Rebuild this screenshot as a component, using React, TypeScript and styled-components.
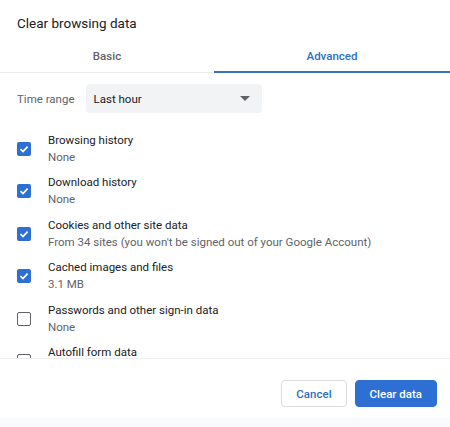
import styled, { createGlobalStyle } from "styled-components";

const GlobalStyle = createGlobalStyle`
  html, body {
    margin: 0;
    padding: 0;
    background: #ffffff;
  }
  body {
    font-family: Roboto, "Liberation Sans", Arial, sans-serif;
    color: #202124;
  }
`;

const Dialog = styled.div`
  width: 450px;
  height: 427px;
  display: flex;
  flex-direction: column;
  background: #ffffff;
  overflow: hidden;
`;

const Title = styled.h1`
  margin: 0;
  padding: 13px 17px 0;
  height: 25px;
  font-size: 13.5px;
  font-weight: 400;
  line-height: 20px;
  color: #202124;
`;

const Tabs = styled.div`
  display: flex;
  height: 34px;
  border-bottom: 1px solid #e8eaed;
`;

const Tab = styled.div<{ $active?: boolean; $width?: string }>`
  flex: ${(p) => (p.$width ? `0 0 ${p.$width}` : "1")};
  display: flex;
  align-items: center;
  justify-content: center;
  font-size: 11.5px;
  font-weight: 500;
  color: ${(p) => (p.$active ? "#2f6fc0" : "#5f6368")};
  box-shadow: ${(p) => (p.$active ? "inset 0 -2px 0 #3a74bf" : "none")};
  margin-bottom: -1px;
`;

const Body = styled.div`
  height: 285px;
  overflow: hidden;
  border-bottom: 1px solid #eceef1;
`;

const RangeRow = styled.div`
  display: flex;
  align-items: center;
  gap: 11px;
  padding: 11px 17px 0;
`;

const RangeLabel = styled.span`
  font-size: 11.5px;
  color: #5f6368;
`;

const Select = styled.div`
  width: 176px;
  height: 29px;
  box-sizing: border-box;
  display: flex;
  align-items: center;
  justify-content: space-between;
  padding: 0 12px 0 8px;
  background: #f1f3f4;
  border-radius: 4px;
  font-size: 11.5px;
  color: #202124;
`;

const Caret = styled.span`
  width: 0;
  height: 0;
  border-left: 5px solid transparent;
  border-right: 5px solid transparent;
  border-top: 5px solid #5f6368;
`;

const List = styled.div`
  display: flex;
  flex-direction: column;
  gap: 8.4px;
  padding: 19px 0 0 17px;
`;

const Item = styled.div`
  display: flex;
  align-items: center;
  gap: 17px;
`;

const Box = styled.span<{ $checked?: boolean }>`
  width: 14px;
  height: 14px;
  box-sizing: border-box;
  border-radius: 2px;
  display: flex;
  align-items: center;
  justify-content: center;
  background: ${(p) => (p.$checked ? "#2d6fd3" : "#ffffff")};
  border: ${(p) => (p.$checked ? "none" : "1.5px solid #5f6368")};
`;

const Texts = styled.div`
  display: flex;
  flex-direction: column;
`;

const Label = styled.span`
  font-size: 11.5px;
  line-height: 17px;
  color: #202124;
`;

const Sub = styled.span`
  font-size: 11.5px;
  line-height: 17px;
  color: #5f6368;
`;

const Footer = styled.div`
  display: flex;
  justify-content: flex-end;
  gap: 8px;
  padding: 21px 13px 0;
  flex: 1;
  background: linear-gradient(#ffffff 0, #ffffff 59px, #f9fafb 59px);
`;

const Button = styled.button<{ $primary?: boolean }>`
  height: 27px;
  padding: 0 14px;
  border-radius: 4px;
  font-family: inherit;
  font-size: 11.5px;
  font-weight: 500;
  cursor: pointer;
  border: 1px solid ${(p) => (p.$primary ? "#2d6fd3" : "#dadce0")};
  background: ${(p) => (p.$primary ? "#2d6fd3" : "#ffffff")};
  color: ${(p) => (p.$primary ? "#ffffff" : "#2f6fc0")};
`;

const Check = () => (
  <svg width="10" height="10" viewBox="0 0 10 10">
    <path d="M1.5 5.2 L4 7.6 L8.6 2.6" fill="none" stroke="#fff" strokeWidth="1.7" />
  </svg>
);

const items = [
  { label: "Browsing history", sub: "None", checked: true },
  { label: "Download history", sub: "None", checked: true },
  {
    label: "Cookies and other site data",
    sub: "From 34 sites (you won't be signed out of your Google Account)",
    checked: true,
  },
  { label: "Cached images and files", sub: "3.1 MB", checked: true },
  { label: "Passwords and other sign-in data", sub: "None", checked: false },
  { label: "Autofill form data", sub: "None", checked: false },
];

const App = () => {
  return (
    <>
      <GlobalStyle />
      <Dialog>
        <Title>Clear browsing data</Title>
        <Tabs>
          <Tab $width="214px">Basic</Tab>
          <Tab $active>Advanced</Tab>
        </Tabs>
        <Body>
          <RangeRow>
            <RangeLabel>Time range</RangeLabel>
            <Select>
              Last hour
              <Caret />
            </Select>
          </RangeRow>
          <List>
            {items.map((item) => (
              <Item key={item.label}>
                <Box $checked={item.checked}>{item.checked && <Check />}</Box>
                <Texts>
                  <Label>{item.label}</Label>
                  <Sub>{item.sub}</Sub>
                </Texts>
              </Item>
            ))}
          </List>
        </Body>
        <Footer>
          <Button>Cancel</Button>
          <Button $primary>Clear data</Button>
        </Footer>
      </Dialog>
    </>
  );
};

export default App;
